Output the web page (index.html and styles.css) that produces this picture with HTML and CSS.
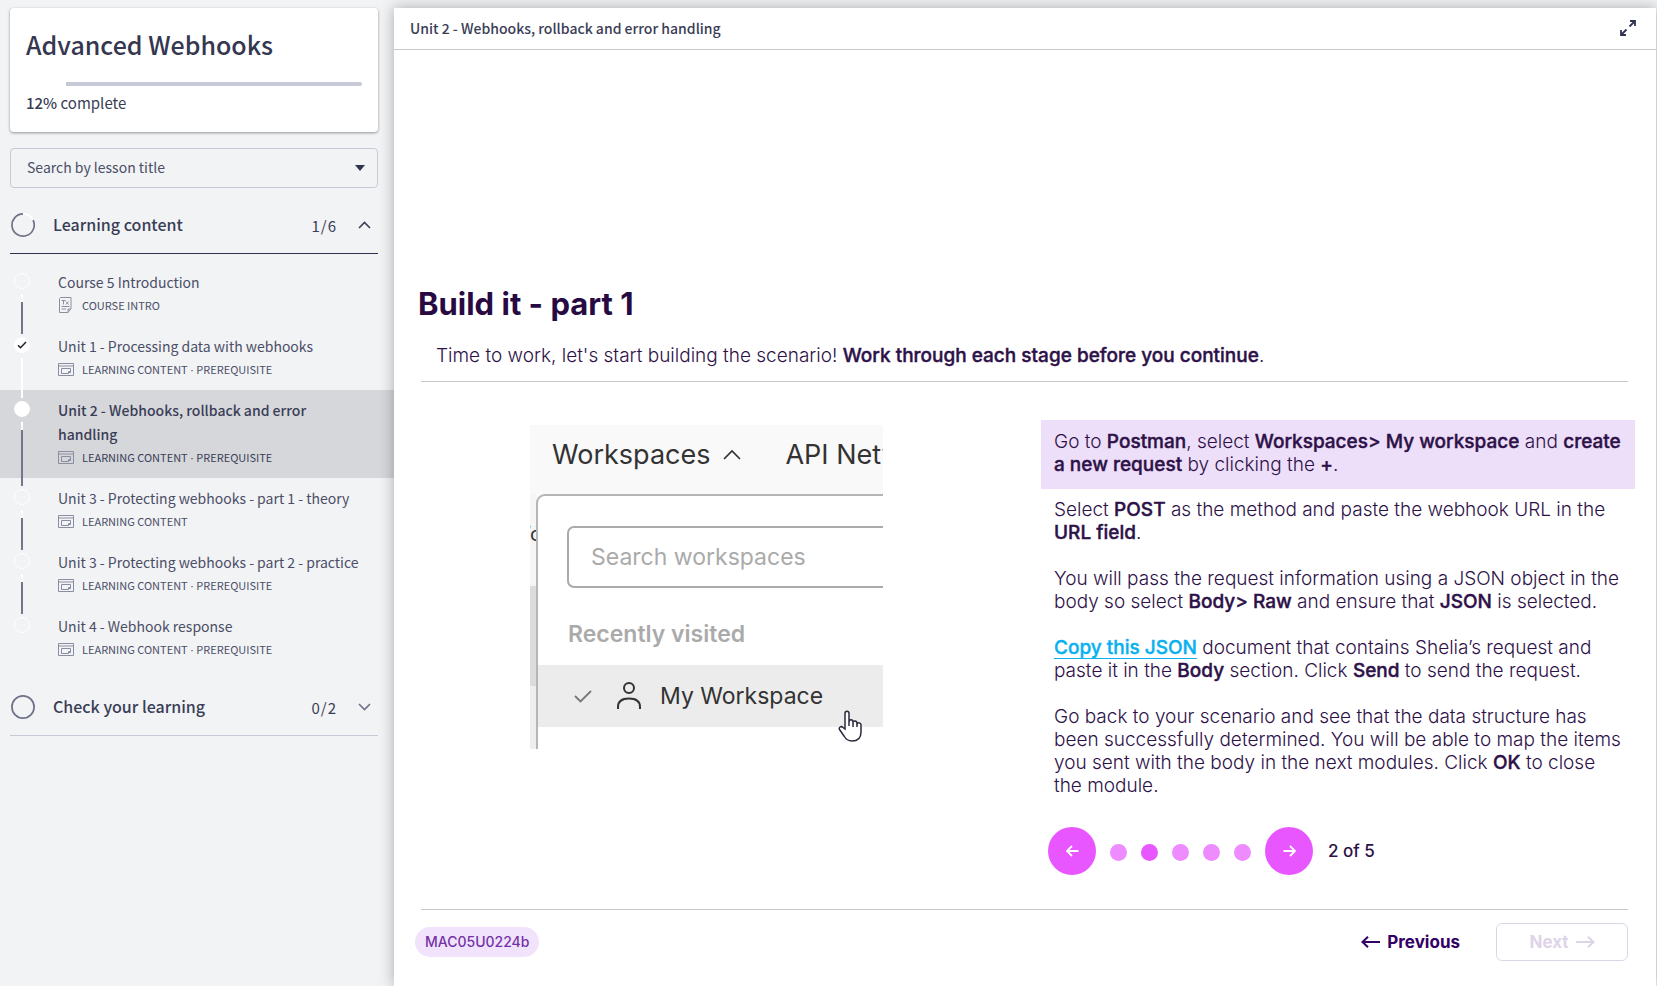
FILE: index.html
```html
<!DOCTYPE html>
<html lang="en">
<head>
<meta charset="utf-8">
<meta name="viewport" content="width=device-width, initial-scale=1">
<title>Advanced Webhooks</title>
<link rel="stylesheet" href="styles.css">
</head>
<body>
<svg width="0" height="0" class="defs" aria-hidden="true">
  <symbol id="i-window" viewBox="0 0 16 13"><path d="M.5.5h15v12H.5zM.5 3h15M3.500 5.500h9v4h-2v1h-7zM12.500 8.500h-2v2" fill="none" stroke="currentColor"/></symbol>
  <symbol id="i-doc" viewBox="0 0 14 16"><path d="M1.500.5h10.500v11l-3 4H.5V1.500zM9 15.500v-3.500h3M2.500 3.500h4M4.500 3.500v4M7 4.500l2.500 3M9.500 4.500L7 7.500M2.500 9.500h8M2.500 12h4.500" fill="none" stroke="currentColor"/></symbol>
</svg>
<div class="page">
  <aside class="sidebar">
    <section class="card">
      <h1 class="course">Advanced Webhooks</h1>
      <progress class="bar" id="progress" max="100" value="12"></progress>
      <label class="complete" for="progress"><b>12%</b> complete</label>
    </section>
    <div class="search">
      <select class="search-select" aria-label="Search by lesson title"><option>Search by lesson title</option></select>
      <svg class="caret" viewBox="0 0 10 6" width="10" height="6"><path d="M0 0h10L5 6z" fill="#2f3350"/></svg>
    </div>

    <button class="section open">
      <svg width="24" height="24" viewBox="0 0 24 24" fill="none" stroke-width="1.700"><path d="M12 .9A11.100 11.100 0 1 0 22 7" stroke="#6f7188"/><path d="M12 .9A11.100 11.100 0 0 1 22 7" stroke="#fff"/></svg>
      <span class="section-title">Learning content</span>
      <span class="count">1/6</span>
      <svg width="13" height="8" viewBox="0 0 13 8"><path d="M1 7l5.500-5.500L12 7" fill="none" stroke="#3c3f58" stroke-width="1.600"/></svg>
    </button>
    <ol class="lessons">
      <li class="lesson"><span class="track"><i class="dot"></i><i class="link"></i></span>
        <button class="lesson-body"><span class="lesson-title">Course 5 Introduction</span>
        <span class="meta"><svg width="16" height="16"><use href="#i-doc"/></svg>COURSE INTRO</span></button></li>
      <li class="lesson"><span class="track"><i class="dot full"><svg width="10" height="8" viewBox="0 0 10 8"><path d="M1 4.200l2.500 2.500L9 1" fill="none" stroke="#1d1f2b" stroke-width="1.500"/></svg></i><i class="link done"></i></span>
        <button class="lesson-body"><span class="lesson-title">Unit 1 - Processing data with webhooks</span>
        <span class="meta"><svg width="16" height="13"><use href="#i-window"/></svg><span>LEARNING CONTENT<span class="sep"> · </span>PREREQUISITE</span></span></button></li>
      <li class="lesson current"><span class="track"><i class="dot full"></i><i class="link"></i></span>
        <button class="lesson-body"><span class="lesson-title">Unit 2 - Webhooks, rollback and error handling</span>
        <span class="meta"><svg width="16" height="13"><use href="#i-window"/></svg><span>LEARNING CONTENT<span class="sep"> · </span>PREREQUISITE</span></span></button></li>
      <li class="lesson"><span class="track"><i class="dot"></i><i class="link"></i></span>
        <button class="lesson-body"><span class="lesson-title">Unit 3 - Protecting webhooks - part 1 - theory</span>
        <span class="meta"><svg width="16" height="13"><use href="#i-window"/></svg>LEARNING CONTENT</span></button></li>
      <li class="lesson"><span class="track"><i class="dot"></i><i class="link"></i></span>
        <button class="lesson-body"><span class="lesson-title">Unit 3 - Protecting webhooks - part 2 - practice</span>
        <span class="meta"><svg width="16" height="13"><use href="#i-window"/></svg><span>LEARNING CONTENT<span class="sep"> · </span>PREREQUISITE</span></span></button></li>
      <li class="lesson"><span class="track"><i class="dot"></i></span>
        <button class="lesson-body"><span class="lesson-title">Unit 4 - Webhook response</span>
        <span class="meta"><svg width="16" height="13"><use href="#i-window"/></svg><span>LEARNING CONTENT<span class="sep"> · </span>PREREQUISITE</span></span></button></li>
    </ol>
    <button class="section">
      <svg width="24" height="24" viewBox="0 0 24 24"><circle cx="12" cy="12" r="11.100" fill="none" stroke="#6f7188" stroke-width="1.700"/></svg>
      <span class="section-title">Check your learning</span>
      <span class="count">0/2</span>
      <svg width="13" height="8" viewBox="0 0 13 8"><path d="M1 1l5.500 5.500L12 1" fill="none" stroke="#6f7188" stroke-width="1.600"/></svg>
    </button>
  </aside>

  <main class="player">
    <header class="top">
      <h2 class="top-title">Unit 2 - Webhooks, rollback and error handling</h2>
      <button class="expand" aria-label="Full screen"><svg width="16" height="16" viewBox="0 0 16 16"><path d="M10 1h5v5M14.500 1.500L9.500 6.500M6 15H1v-5M1.500 14.500l5-5" fill="none" stroke="#2f3350" stroke-width="1.800"/></svg></button>
    </header>
    <article class="slide">
      <h2 class="slide-title">Build it - part 1</h2>
      <p class="intro">Time to work, let's start building the scenario! <b>Work through each stage before you continue</b>.</p>
      <hr class="rule">
      <div class="columns">
        <div class="shot">
          <div class="shot-nav"><span>Workspaces</span><svg width="18" height="11" viewBox="0 0 18 11"><path d="M1 10l8-8 8 8" fill="none" stroke="#333" stroke-width="1.700"/></svg><span class="api">API Network</span></div>
          <div class="shot-main">
            <div class="shot-edge"><span class="cut">’c</span></div>
            <div class="menu">
              <input class="menu-search" type="text" placeholder="Search workspaces" aria-label="Search workspaces">
              <div class="recent">Recently visited</div>
              <div class="workspace">
                <svg width="18" height="13" viewBox="0 0 18 13"><path d="M1 6l5.500 5.500L17 1" fill="none" stroke="#777" stroke-width="1.800"/></svg>
                <svg class="person" width="24" height="28" viewBox="0 0 24 28" fill="none" stroke="#333" stroke-width="2"><circle cx="12" cy="6" r="5"/><path d="M1 27v-2c0-5.500 4-8.500 11-8.500s11 3 11 8.500v2"/></svg>
                <span>My Workspace</span>
              </div>
            </div>
          </div>
          <svg class="pointer" width="24" height="32" viewBox="0 0 24 32"><path d="M7 19V3.500C7 .5 11 .5 11 3.500V12c0-3 4-3 4 0v1c0-3 4-2.500 4 .5v1c0-2.500 4-2 4 .5v7c0 6-3.500 9-9 9-4 0-6-1.500-8-5l-4.500-6.500c-1-2 1.500-4 3.500-2z" fill="#fff" stroke="#2b2b3d" stroke-width="1.500"/><path d="M11 12v4M15 13v4M19 14v3" stroke="#2b2b3d" stroke-width="1.500"/></svg>
        </div>
        <div class="steps">
          <p class="step active">Go to <b>Postman</b>, select <b>Workspaces&gt; My workspace</b> and <b>create a new request</b> by clicking the <b>+</b>.</p>
          <p class="step">Select <b>POST</b> as the method and paste the webhook URL in the <b>URL field</b>.</p>
          <p class="step">You will pass the request information using a JSON object in the body so select <b>Body&gt; Raw</b> and ensure that <b>JSON</b> is selected.</p>
          <p class="step"><a class="copy" href="#json">Copy this JSON</a> document that contains Shelia’s request and paste it in the <b>Body</b> section. Click <b>Send</b> to send the request.</p>
          <p class="step">Go back to your scenario and see that the data structure has been successfully determined. You will be able to map the items you sent with the body in the next modules. Click <b>OK</b> to close the module.</p>
          <nav class="pager">
            <button class="round" aria-label="Previous step"><svg width="13" height="12" viewBox="0 0 13 12"><path d="M12.500 6H1.500M6 1L1 6l5 5" fill="none" stroke="#fff" stroke-width="1.800"/></svg></button>
            <span class="dots"><button class="pip" aria-label="Step 1"></button><button class="pip on" aria-label="Step 2"></button><button class="pip" aria-label="Step 3"></button><button class="pip" aria-label="Step 4"></button><button class="pip" aria-label="Step 5"></button></span>
            <button class="round" aria-label="Next step"><svg width="13" height="12" viewBox="0 0 13 12"><path d="M.5 6h11M7 1l5 5-5 5" fill="none" stroke="#fff" stroke-width="1.800"/></svg></button>
            <span class="of">2 of 5</span>
          </nav>
        </div>
      </div>
      <hr class="rule low">
      <footer class="foot">
        <span class="badge">MAC05U0224b</span>
        <button class="prev"><svg width="19" height="12" viewBox="0 0 19 12"><path d="M19 6H1.500M7 .8L1.500 6 7 11.200" fill="none" stroke="currentColor" stroke-width="2"/></svg>Previous</button>
        <button class="next" disabled>Next<svg width="19" height="12" viewBox="0 0 19 12"><path d="M0 6h17.500M12 .8L17.500 6 12 11.200" fill="none" stroke="currentColor" stroke-width="2"/></svg></button>
      </footer>
    </article>
  </main>
</div>
</body>
</html>
```
FILE: styles.css
```css
* { box-sizing: border-box; }
body { margin: 0; background: #f1f3f5; color: #3a3d56; font-family: "Noto Sans CJK SC", "Noto Sans", sans-serif; font-size: 14px; }
button { font: inherit; color: inherit; background: none; border: 0; padding: 0; text-align: left; cursor: pointer; }
h1, h2, p, ol { margin: 0; padding: 0; }
svg { flex: none; display: block; }
.defs { position: absolute; }
.page { display: flex; min-height: 100vh; }

.sidebar { flex: none; width: 394px; padding-top: 8px; }
.card { margin: 0 16px 0 10px; padding: 18px 16px 20px; background: #fff; border-radius: 4px; box-shadow: 0 1px 3px rgba(0, 0, 0, .4); }
.course { font-size: 25px; font-weight: 500; line-height: 36px; color: #34374f; }
.bar { display: block; width: 100%; height: 4px; margin: 20px 0 8px; appearance: none; border: 0; }
.bar::-webkit-progress-bar { background: #c7c9d6; border-radius: 2px; }
.bar::-webkit-progress-value { background: #fff; }
.complete { display: block; font-size: 15px; line-height: 18px; }
.complete b { font-weight: 500; }
.search { position: relative; margin: 16px 16px 0 10px; }
.search-select { display: block; width: 100%; height: 40px; padding: 0 16px 2px; appearance: none; font: inherit; color: #4b4e66; background: transparent; border: 1px solid #c7c9d6; border-radius: 4px; }
.caret { position: absolute; right: 13px; top: 17px; pointer-events: none; }

.section { display: flex; align-items: center; width: 368px; height: 57px; margin: 9px 16px 0 10px; padding: 0 7px 0 1px; border-bottom: 1px solid #c7c9d6; }
.section.open { border-color: #2f3350; }
.section-title { margin-left: 18px; padding-bottom: 2px; font-size: 16px; font-weight: 500; line-height: 24px; flex: 1; }
.count { margin-right: 21px; font-size: 15px; letter-spacing: 1px; }
.lessons { list-style: none; margin-top: 8px; }
.lesson { display: flex; padding: 8px 28px 8px 14px; color: #4b4e66; }
.current { background: #d5d7db; color: #3a3d56; }
.track { flex: none; display: flex; flex-direction: column; align-items: center; width: 16px; margin: 3px 28px -16px 0; gap: 5px; }
.dot { flex: none; display: flex; align-items: center; justify-content: center; width: 16px; height: 16px; border: 1px solid #fff; border-radius: 50%; }
.full { background: #fff; }
.link { flex: 1; width: 2px; background: linear-gradient(#fff 8px, #73758b 8px); }
.link.done { background: #fff; }
.lesson-body { flex: 1; min-width: 0; }
.lesson-title { display: block; line-height: 24px; }
.current .lesson-title { font-weight: 500; }
.meta { display: flex; align-items: center; gap: 8px; font-size: 11px; line-height: 22px; padding-bottom: 2px; }
.meta svg { color: #8b8da0; }
.sep { font-family: "Open Sans", sans-serif; line-height: 1; }

.player { position: relative; flex: 1; min-width: 0; margin: 8px 1px 0 0; display: flex; flex-direction: column; background: #fff; box-shadow: 0 0 14px rgba(0, 0, 0, .3); }
.top { display: flex; align-items: center; justify-content: space-between; height: 42px; padding: 0 20px 2px 16px; border-bottom: 1px solid #c7c9cf; }
.top-title { font-size: 14px; font-weight: 500; line-height: 24px; }
.slide { margin-top: auto; padding: 40px 21px 25px; font-family: Inter, sans-serif; color: #2d1148; }
.slide-title { margin-left: 3px; font-size: 31px; font-weight: 700; line-height: 40px; color: #280a42; }
.intro { margin: 20px 0 13px 21px; font-size: 19px; font-weight: 300; line-height: 24px; }
.rule { height: 1px; margin: 0 7px 0 6px; border: 0; background: #cbc5cb; }
.columns { display: grid; grid-template-columns: 626fr 594fr; margin-top: 38px; }
.slide b, .copy { font-weight: 500; -webkit-text-stroke: .4px; }
.step { padding: 0 13px; margin-bottom: 23px; font-size: 19px; font-weight: 300; line-height: 23px; }
.active { padding: 10px 13px 13px; margin-bottom: 9px; background: #eddff9; }
.copy { color: #0ab1ef; text-underline-offset: 4px; text-decoration-thickness: 1px; }
.pager { display: flex; align-items: center; margin: 30px 0 34px 7px; }
.round { display: flex; align-items: center; justify-content: center; width: 48px; height: 48px; border-radius: 50%; background: #e856ff; }
.dots { display: flex; gap: 14px; margin: 2px 14px 0 14px; }
.pip { width: 17px; height: 17px; border-radius: 50%; background: #ee8cff; }
.pip.on { background: #e856ff; }
.of { margin-left: 15px; font-size: 17px; font-weight: 500; }
.foot { display: flex; align-items: center; margin-top: 13px; padding-right: 7px; font-size: 17px; font-weight: 700; }
.badge { margin-right: auto; padding: 0 10px; border-radius: 15px; background: #f0e3fb; color: #7333a6; font-size: 14px; font-weight: 500; line-height: 30px; }
.prev { display: flex; align-items: center; gap: 7px; color: #340065; }
.next { display: flex; align-items: center; justify-content: center; gap: 7px; width: 132px; height: 38px; margin-left: 36px; border: 1px solid #ded4e8; border-radius: 6px; color: #ded4e8; }

.shot { position: relative; width: 353px; height: 324px; margin: 5px 0 0 115px; display: flex; flex-direction: column; overflow: hidden; background: #f9f9f9; color: #333; font-size: 27px; }
.shot-nav { flex: none; display: flex; align-items: center; height: 69px; padding: 0 0 11px 22px; white-space: nowrap; }
.shot-nav svg { margin: 0 44px 0 13px; }
.shot-main { flex: 1; display: flex; min-height: 0; }
.shot-edge { flex: none; width: 6px; padding-top: 28px; overflow: hidden; font-size: 20px; text-indent: -4px; background: linear-gradient(#f5f5f5 92px, #dcdcdc 92px, #dcdcdc 192px, #eee 192px); }
.menu { flex: 1; min-width: 0; margin-right: -10px; background: #fff; border: 2px solid #b5b5b5; border-bottom: 0; border-radius: 9px 0 0 0; }
.menu-search { display: block; width: 400px; height: 62px; margin: 30px 0 0 29px; padding: 0 22px; border: 2px solid #aaa; border-radius: 7px; font: 400 23px Inter, sans-serif; }
.menu-search::placeholder { color: #aaa; opacity: 1; }
.recent { margin: 31px 0 16px 30px; font-size: 23px; font-weight: 600; line-height: 30px; color: #aaa; }
.workspace { display: flex; align-items: center; height: 62px; padding-left: 36px; font-size: 23px; background: #ececec; }
.person { margin: 0 19px 0 25px; }
.pointer { position: absolute; left: 308px; top: 285px; }
```
